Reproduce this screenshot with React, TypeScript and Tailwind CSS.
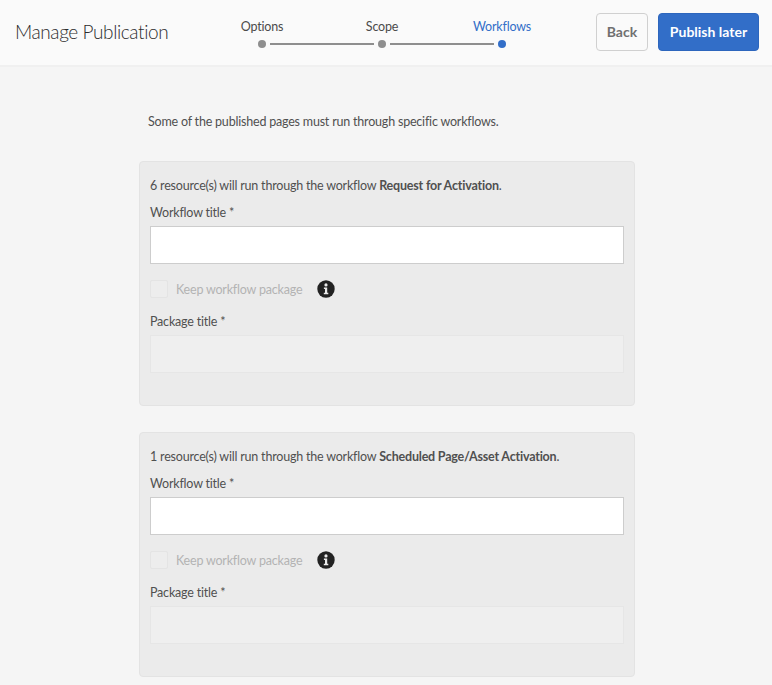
const steps = [
  { label: 'Options', active: false },
  { label: 'Scope', active: false },
  { label: 'Workflows', active: true },
];

function InfoIcon() {
  return (
    <svg width="18" height="18" viewBox="0 0 18 18" className="shrink-0">
      <circle cx="9" cy="9" r="8.7" fill="#222222" />
      <circle cx="9" cy="4.9" r="1.6" fill="#ebebeb" />
      <path d="M6.9 7.4h3.3v5.4h1.1v1.5H6.8v-1.5h1.2V8.9H6.9z" fill="#ebebeb" />
    </svg>
  );
}

function Stepper() {
  return (
    <div className="flex w-[360px] shrink-0">
      {steps.map((step, i) => (
        <div key={step.label} className="relative flex w-[120px] flex-col items-center">
          <span className={`h-[18px] text-[12.5px] leading-[18px] tracking-[-0.2px] ${step.active ? 'text-[#326ec8]' : 'text-[#4b4b4b]'}`}>
            {step.label}
          </span>
          <span className={`mt-[4px] h-2 w-2 rounded-full ${step.active ? 'bg-[#326ec8]' : 'bg-[#8e8e8e]'}`} />
          {i < steps.length - 1 && (
            <span className="absolute left-[68px] top-[25px] h-[2px] w-[104px] bg-[#8e8e8e]" />
          )}
        </div>
      ))}
    </div>
  );
}

function WorkflowCard({ count, workflow }: { count: number; workflow: string }) {
  return (
    <section className="h-[245px] rounded-[4px] border border-[#e3e3e3] bg-[#ebebeb] px-[10px] pt-[15px] text-[12.5px] leading-[18px] tracking-[-0.2px] text-[#505050]">
      <p className="h-[18px]">
        {count} resource(s) will run through the workflow <strong className="font-bold">{workflow}</strong>.
      </p>
      <label className="mt-[9px] block h-[18px]">Workflow title *</label>
      <input className="mt-[4px] block h-[38px] w-[474px] border border-[#cdcdcd] bg-white" />
      <div className="mt-[16px] flex h-[18px] items-center">
        <span className="h-[18px] w-[18px] rounded-[2px] border border-[#e4e4e4] bg-[#ededed]" />
        <span className="ml-[8px] w-[141px] pt-[1px] text-[#b3b3b3]">Keep workflow package</span>
        <InfoIcon />
      </div>
      <label className="mt-[15px] block h-[18px]">Package title *</label>
      <input disabled className="mt-[4px] block h-[38px] w-[474px] border border-[#e6e6e6] bg-[#efefef]" />
    </section>
  );
}

export default function App() {
  return (
    <div className="h-[685px] overflow-hidden bg-[#f5f5f5] font-['Lato',sans-serif]">
      <header className="flex h-[67px] items-center border-b-2 border-[#f0f0f0] bg-[#fafafa] pl-[15px] pr-[13px]">
        <h1 className="w-[187px] shrink-0 text-[19px] font-light tracking-[-0.4px] text-[#2c2c2c]">Manage Publication</h1>
        <Stepper />
        <div className="ml-auto -mt-[1px] flex gap-[10px]">
          <button className="h-[38px] w-[52px] rounded-[4px] border border-[#d0d0d0] pb-[2px] text-[14px] font-bold text-[#707070]">
            Back
          </button>
          <button className="h-[38px] w-[101px] rounded-[4px] border border-[#2d66bd] bg-[#326ec8] pb-[2px] text-[14px] font-bold text-white">
            Publish later
          </button>
        </div>
      </header>
      <main className="pl-[139px] pt-[46px]">
        <div className="w-[496px]">
          <p className="h-[18px] pl-[9px] text-[12.5px] leading-[18px] tracking-[-0.2px] text-[#505050]">
            Some of the published pages must run through specific workflows.
          </p>
          <div className="mt-[30px] flex flex-col gap-[26px]">
            <WorkflowCard count={6} workflow="Request for Activation" />
            <WorkflowCard count={1} workflow="Scheduled Page/Asset Activation" />
          </div>
        </div>
      </main>
    </div>
  );
}
